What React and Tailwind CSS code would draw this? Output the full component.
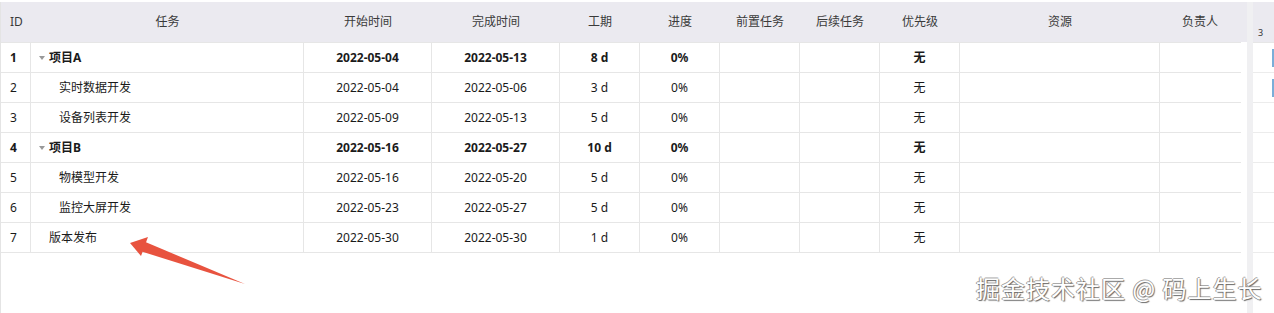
const rows = [
  { id: 1, name: '项目A', start: '2022-05-04', end: '2022-05-13', dur: '8 d', bold: true, level: 0, group: true },
  { id: 2, name: '实时数据开发', start: '2022-05-04', end: '2022-05-06', dur: '3 d', level: 1 },
  { id: 3, name: '设备列表开发', start: '2022-05-09', end: '2022-05-13', dur: '5 d', level: 1 },
  { id: 4, name: '项目B', start: '2022-05-16', end: '2022-05-27', dur: '10 d', bold: true, level: 0, group: true },
  { id: 5, name: '物模型开发', start: '2022-05-16', end: '2022-05-20', dur: '5 d', level: 1 },
  { id: 6, name: '监控大屏开发', start: '2022-05-23', end: '2022-05-27', dur: '5 d', level: 1 },
  { id: 7, name: '版本发布', start: '2022-05-30', end: '2022-05-30', dur: '1 d', level: 0 },
];

const cols = [
  { key: 'start', title: '开始时间', w: 'w-[128px]' },
  { key: 'end', title: '完成时间', w: 'w-[128px]' },
  { key: 'dur', title: '工期', w: 'w-[80px]' },
  { key: 'progress', title: '进度', w: 'w-[80px]' },
  { key: 'pre', title: '前置任务', w: 'w-[80px]' },
  { key: 'post', title: '后续任务', w: 'w-[80px]' },
  { key: 'priority', title: '优先级', w: 'w-[80px]' },
  { key: 'resource', title: '资源', w: 'w-[200px]' },
  { key: 'owner', title: '负责人', w: 'w-[80px]' },
];

function cellValue(row, key) {
  if (key === 'progress') return '0%';
  if (key === 'priority') return '无';
  if (key === 'pre' || key === 'post' || key === 'resource' || key === 'owner') return '';
  return row[key];
}

export default function App() {
  return (
    <div
      className="relative w-[1274px] h-[313px] overflow-hidden bg-white text-[12px] text-[#1a1a1a]"
      style={{ fontFamily: '"Noto Sans", "Noto Sans CJK SC", sans-serif' }}
    >
      <div className="flex h-full pt-[2px]">
        {/* left grid */}
        <div className="flex flex-col w-[1247px] border-l border-[#e4e4e4]">
          <div className="flex h-[40px] bg-[#ebeaf0] text-[#3a3a3a] items-center">
            <div className="w-[30px] pl-[9px]">ID</div>
            <div className="w-[273px] text-center">任务</div>
            {cols.map((c) => (
              <div key={c.key} className={`${c.w} text-center`}>{c.title}</div>
            ))}
          </div>
          <div className="w-[1240px] border-t border-[#e6e6e6]">
            {rows.map((r) => (
              <div
                key={r.id}
                className={`flex h-[30px] border-b border-[#e6e6e6] items-stretch ${r.bold ? 'font-bold' : ''}`}
              >
                <div className="w-[30px] pl-[9px] flex items-center border-r border-[#e6e6e6]">{r.id}</div>
                <div className="w-[273px] flex items-center border-r border-[#e6e6e6] pl-[8px]">
                  {r.group ? (
                    <span className="w-[10px] flex items-center">
                      <svg width="6" height="4" viewBox="0 0 6 4">
                        <polygon points="0,0 6,0 3,4" fill="#999" />
                      </svg>
                    </span>
                  ) : (
                    <span className={r.level ? 'w-[20px]' : 'w-[10px]'}></span>
                  )}
                  <span>{r.name}</span>
                </div>
                {cols.map((c, i) => (
                  <div
                    key={c.key}
                    className={`${c.w} flex items-center justify-center ${i < cols.length - 1 ? 'border-r border-[#e6e6e6]' : ''}`}
                  >
                    {cellValue(r, c.key)}
                  </div>
                ))}
              </div>
            ))}
          </div>
        </div>

        {/* splitter */}
        <div className="w-[6px] h-full bg-[#f0f0f2]"></div>

        {/* gantt pane */}
        <div className="flex-1 flex flex-col">
          <div className="h-[40px] bg-[#ebeaf0] flex items-end pb-[3px] pl-[5px] text-[9px] text-[#333]">3</div>
          <div className="border-t border-[#e6e6e6]">
            {rows.map((r) => (
              <div key={r.id} className="h-[30px] border-b border-[#ececec] flex items-center justify-end">
                {r.id <= 2 && <div className="w-[2px] h-[18px] bg-[#7aaed8]"></div>}
              </div>
            ))}
          </div>
        </div>
      </div>

      {/* annotation arrow */}
      <svg className="absolute left-0 top-0 pointer-events-none" width="1274" height="313">
        <polygon points="130,243 148,237 141,256" fill="#e8533f" />
        <polygon points="143,241 245,284 140,251" fill="#e8533f" />
      </svg>

      {/* watermark */}
      <div
        className="absolute left-[976px] top-[270px] text-[24px] text-white tracking-[1px]"
        style={{ fontFamily: '"Noto Sans CJK SC", sans-serif', textShadow: '1px 1px 1px #666, -1px 0 0 #999, 0 -1px 0 #aaa' }}
      >
        掘金技术社区 @ 码上生长
      </div>
    </div>
  );
}
